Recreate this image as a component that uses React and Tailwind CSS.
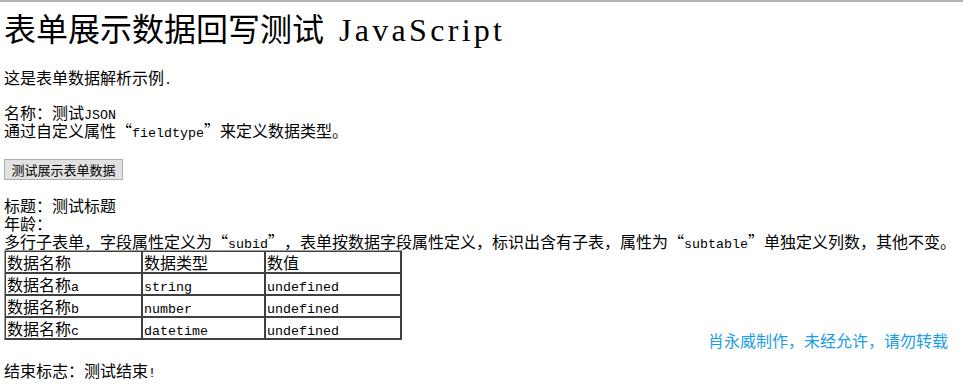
import React from "react";

const rows = [
  { name: "数据名称", nameEn: "a", type: "string" },
  { name: "数据名称", nameEn: "b", type: "number" },
  { name: "数据名称", nameEn: "c", type: "datetime" },
];

// latin text in the page is narrow monospace, 8px per char
const En = ({ children, className = "" }) => (
  <span className={`font-['Liberation_Mono',monospace] text-[13.33px] leading-[0] ${className}`}>{children}</span>
);

// full width curly quotes
const Lq = () => <span className="inline-block w-[16px] text-right leading-[0]">“</span>;
const Rq = () => <span className="inline-block w-[16px] text-left leading-[0]">”</span>;

const Cell = ({ children, className = "" }) => (
  <td className={`border border-[#404040] p-[1px] align-top ${className}`}>
    <div className="h-[18px] whitespace-nowrap leading-[18px]">{children}</div>
  </td>
);

const App = () => {
  return (
    <div className="relative min-h-[384px] bg-white border-t-2 border-[#b4b4b4] pl-[4px] text-black font-['Noto_Sans_CJK_SC',sans-serif] text-[16px] leading-[18px]">
      <h1 className="pt-[7px] text-[32px] leading-[37px] font-normal whitespace-nowrap">
        表单展示数据回写测试
        <span className="ml-[15px] font-['Liberation_Serif',serif] tracking-[3.3px] leading-[0]">JavaScript</span>
      </h1>

      <p className="mt-[22px]">
        这是表单数据解析示例<En>.</En>
      </p>

      <div className="mt-[17px]">
        <div>
          名称：测试<En>JSON</En>
        </div>
        <div>
          通过自定义属性<Lq />
          <En>fieldtype</En>
          <Rq />来定义数据类型。
        </div>
      </div>

      <button className="block mt-[20px] h-[21px] w-[119px] border border-[#adadad] bg-[#e1e1e1] text-[13px] leading-[19px]">
        测试展示表单数据
      </button>

      <div className="mt-[16px]">
        <div>标题：测试标题</div>
        <div>年龄：</div>
        <div className="whitespace-nowrap">
          多行子表单，字段属性定义为<Lq />
          <En>subid</En>
          <Rq />，表单按数据字段属性定义，标识出含有子表，属性为<Lq />
          <En>subtable</En>
          <Rq />单独定义列数，其他不变。
        </div>
      </div>

      <table className="w-[398px] border-separate border-spacing-0 border border-t-[#a0a0a0] border-l-[#a0a0a0] border-b-[#404040] border-r-[#404040]">
        <tbody>
          <tr>
            <Cell className="w-[137px]">数据名称</Cell>
            <Cell className="w-[123px]">数据类型</Cell>
            <Cell>数值</Cell>
          </tr>
          {rows.map((r) => (
            <tr key={r.nameEn}>
              <Cell>
                {r.name}
                <En>{r.nameEn}</En>
              </Cell>
              <Cell>
                <En>{r.type}</En>
              </Cell>
              <Cell>
                <En>undefined</En>
              </Cell>
            </tr>
          ))}
        </tbody>
      </table>

      <p className="mt-[21px]">
        结束标志：测试结束<En>!</En>
      </p>

      {/* watermark, fixed at the lower right */}
      <div className="absolute left-[708px] top-[328px] text-[16px] leading-[20px] text-[#1a9de6] font-['Noto_Sans_CJK_SC',sans-serif]">
        肖永威制作，未经允许，请勿转载
      </div>
    </div>
  );
};

export default App;
